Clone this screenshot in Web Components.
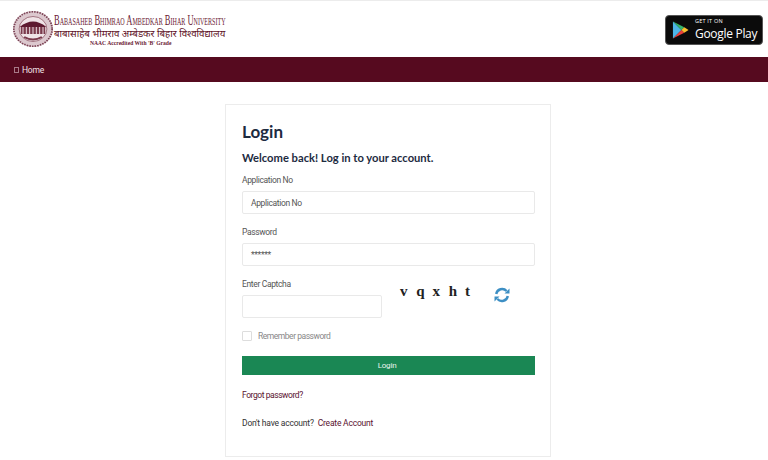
<!DOCTYPE html>
<html>
<head>
<meta charset="utf-8">
<style>
    html, body { margin: 0; padding: 0; background: #fff; height: 460px; overflow: hidden; }
</style>
</head>
<body>
<site-header></site-header>
<nav-bar>Home</nav-bar>
<login-card></login-card>

<script>
class SiteHeader extends HTMLElement {
    constructor() {
        super();
        this.attachShadow({ mode: 'open' });
        this.shadowRoot.innerHTML = `
        <style>
            :host {
                display: flex;
                align-items: center;
                justify-content: space-between;
                height: 57px;
                padding: 0 5px 0 13px;
                box-sizing: border-box;
                border-top: 1px solid #ececec;
                background: #fff;
            }
            .brand { display: flex; align-items: center; gap: 1px; }
            .names { display: flex; flex-direction: column; align-items: flex-start; width: 174px; margin-top: 1px; }
            .en {
                font: 15.5px/14px 'Liberation Serif', serif;
                font-variant: small-caps;
                color: #6b1a33;
                white-space: nowrap;
                transform: scaleX(0.55);
                transform-origin: left center;
                width: 172px;
            }
            .hi {
                font: 400 9.7px/13px 'Noto Sans', 'Noto Sans CJK SC', sans-serif;
                color: #5e1024;
                white-space: nowrap;
            }
            .naac {
                font: 700 5.6px/7px 'Liberation Serif', serif;
                color: #6b1a33;
                margin: 0 0 0 36px;
                white-space: nowrap;
            }
            .play {
                display: flex;
                align-items: center;
                gap: 6px;
                width: 98px;
                height: 30px;
                box-sizing: border-box;
                padding-left: 6px;
                margin-top: 1px;
                background: #0b0b0b;
                border: 1px solid #555;
                border-radius: 4px;
                color: #fff;
            }
            .store { display: flex; flex-direction: column; font-family: 'Open Sans', sans-serif; }
            .get { font-size: 5.5px; letter-spacing: .2px; }
            .gp { font-size: 12px; letter-spacing: -.3px; white-space: nowrap; }
        </style>
        <div class="brand">
            <svg width="40" height="36" viewBox="2 0 36 36" preserveAspectRatio="none">
                <circle cx="20" cy="18" r="18" fill="#dcc8ce"/>
                <circle cx="20" cy="18" r="17.2" fill="none" stroke="#7a4254" stroke-width="1.6" stroke-dasharray="1.4 1"/>
                <circle cx="20" cy="18" r="12.5" fill="#efe3e6" stroke="#7a3a4c" stroke-width=".6"/>
                <path d="M8 16 Q20 5 32 16 Z" fill="#5e1a30"/>
                <rect x="9" y="16" width="22" height="7" fill="#7a3a4c"/>
                <path d="M11 16v7M14 16v7M17 16v7M20 16v7M23 16v7M26 16v7M29 16v7" stroke="#efe3e6" stroke-width=".9"/>
                <path d="M12 26 Q20 31 28 26" fill="none" stroke="#7a3a4c" stroke-width="2"/>
            </svg>
            <div class="names">
                <div class="en">Babasaheb Bhimrao Ambedkar Bihar University</div>
                <div class="hi">बाबासाहेब भीमराव अम्बेडकर बिहार विश्वविद्यालय</div>
                <div class="naac">NAAC Accredited With 'B' Grade</div>
            </div>
        </div>
        <div class="play">
            <svg width="17" height="20" viewBox="0 0 18 20">
                <path d="M1 1 L10 10 L1 19 Z" fill="#4db6e8"/>
                <path d="M1 1 L13 7.2 L10 10 Z" fill="#35b56a"/>
                <path d="M1 19 L13 12.8 L10 10 Z" fill="#e8413c"/>
                <path d="M13 7.2 L17.5 10 L13 12.8 L10 10 Z" fill="#fbc02d"/>
            </svg>
            <div class="store">
                <span class="get">GET IT ON</span>
                <span class="gp">Google Play</span>
            </div>
        </div>`;
    }
}

class NavBar extends HTMLElement {
    constructor() {
        super();
        this.attachShadow({ mode: 'open' });
        this.shadowRoot.innerHTML = `
        <style>
            :host {
                display: flex;
                align-items: center;
                gap: 3px;
                height: 25px;
                padding-left: 14px;
                background: #560a1f;
                color: #f1e4e8;
                font: 8.5px 'Roboto', sans-serif;
                letter-spacing: -.2px;
            }
            .box { width: 3px; height: 4px; border: 1px solid #a87a88; }
        </style>
        <span class="box"></span><slot></slot>`;
    }
}

class FormField extends HTMLElement {
    constructor() {
        super();
        this.attachShadow({ mode: 'open' });
        this.shadowRoot.innerHTML = `
        <style>
            :host { display: block; }
            label { display: block; padding-top: 1px; font-size: 8.5px; letter-spacing: -.35px; line-height: 11px; color: #555; margin-bottom: 5px; }
            .input {
                height: 23px;
                box-sizing: border-box;
                padding: 0 8px;
                display: flex;
                align-items: center;
                border: 1px solid #e9e9e9;
                border-radius: 2px;
                font-size: 8.5px;
                letter-spacing: -.35px;
                color: #555;
                background: #fff;
            }
        </style>
        <label></label>
        <div class="input"><slot></slot></div>`;
    }
    connectedCallback() {
        this.shadowRoot.querySelector('label').textContent = this.getAttribute('label');
    }
}

class LoginCard extends HTMLElement {
    constructor() {
        super();
        this.attachShadow({ mode: 'open' });
        this.shadowRoot.innerHTML = `
        <style>
            :host {
                display: block;
                width: 326px;
                height: 353px;
                box-sizing: border-box;
                margin: 22px 0 0 225px;
                padding: 15px 15px 0 16px;
                border: 1px solid #ececec;
                font-family: 'Roboto', sans-serif;
                color: #444;
            }
            h1 { margin: 0; font: 700 17px/24px 'Lato', sans-serif; color: #1d2b3f; }
            h2 { margin: 6px 0 8px; font: 700 11.2px/16px 'Lato', sans-serif; color: #1d2b3f; }
            .stack { display: flex; flex-direction: column; gap: 12px; }
            .captcha { display: flex; align-items: flex-start; margin-top: 12px; }
            .captcha form-field { width: 140px; }
            .code {
                display: flex;
                margin: 5px 0 0 18px;
                width: 94px;
                font: 700 15px/16px 'Liberation Serif', serif;
                color: #222;
            }
            .code span { width: 16.25px; }
            .refresh { margin: 9px 0 0 0; }
            .remember { display: flex; align-items: center; gap: 6px; margin-top: 13px; font-size: 8.5px; letter-spacing: -.47px; color: #888; }
            .check { width: 10px; height: 10px; box-sizing: border-box; border: 1px solid #ddd; border-radius: 1px; }
            .btn {
                display: flex;
                align-items: center;
                justify-content: center;
                height: 19px;
                margin-top: 15px;
                padding-right: 3px;
                background: #1a8754;
                color: #e8f3ed;
                font-size: 8px;
                letter-spacing: -.2px;
            }
            .forgot { margin-top: 15px; font-size: 8.5px; letter-spacing: -.44px; line-height: 11px; color: #5a1230; }
            .signup { margin-top: 17px; font-size: 8.5px; letter-spacing: -.2px; line-height: 11px; color: #333; }
            .signup a { margin-left: 2px; color: #5a1230; }
        </style>
        <h1>Login</h1>
        <h2>Welcome back! Log in to your account.</h2>
        <div class="stack">
            <form-field label="Application No">Application No</form-field>
            <form-field label="Password">******</form-field>
        </div>
        <div class="captcha">
            <form-field label="Enter Captcha"></form-field>
            <div class="code"><span>v</span><span>q</span><span>x</span><span>h</span><span>t</span></div>
            <svg class="refresh" width="16" height="16" viewBox="0 0 16 16" fill="none" stroke="#3d8fc4" stroke-width="2.4">
                <path d="M2.2 7 A6 6 0 0 1 12.6 4"/>
                <path d="M13.8 9 A6 6 0 0 1 3.4 12"/>
                <path d="M10.5 6.5 H15.5 V1.5 Z" fill="#3d8fc4" stroke="none"/>
                <path d="M5.5 9.5 H0.5 V14.5 Z" fill="#3d8fc4" stroke="none"/>
            </svg>
        </div>
        <div class="remember"><span class="check"></span>Remember password</div>
        <div class="btn">Login</div>
        <div class="forgot">Forgot password?</div>
        <div class="signup">Don't have account? <a>Create Account</a></div>`;
    }
}

customElements.define('site-header', SiteHeader);
customElements.define('nav-bar', NavBar);
customElements.define('form-field', FormField);
customElements.define('login-card', LoginCard);
</script>
</body>
</html>
